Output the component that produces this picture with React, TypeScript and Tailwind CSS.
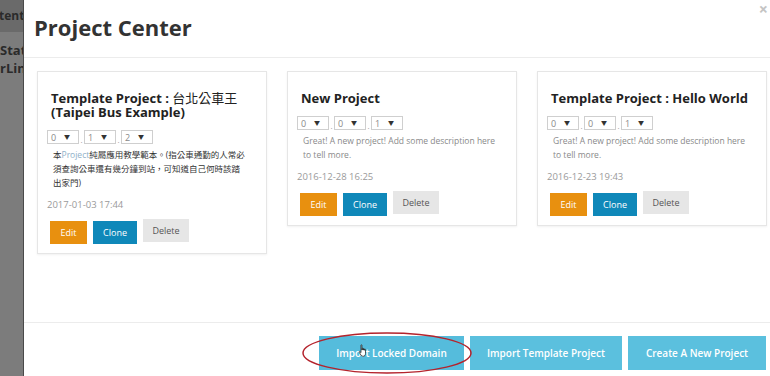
import React from 'react'

const font = { fontFamily: '"Open Sans", "Noto Sans CJK TC", sans-serif' }

interface Project {
  title: React.ReactNode
  versions: string[]
  description: React.ReactNode
  date: string
}

const projects: Project[] = [
  {
    title: (
      <>
        Template Project : <span className="font-normal">台北公車王</span> (Taipei Bus Example)
      </>
    ),
    versions: ['0', '1', '2'],
    description: (
      <span className="text-[#333]">
        本<span className="text-[#8fb0c8]">Project</span>純屬應用教學範本。(指公車通勤的人常必
        <br />
        須查詢公車還有幾分鐘到站，可知道自己何時該踏
        <br />
        出家門)
      </span>
    ),
    date: '2017-01-03 17:44',
  },
  {
    title: 'New Project',
    versions: ['0', '0', '1'],
    description: 'Great! A new project! Add some description here to tell more.',
    date: '2016-12-28 16:25',
  },
  {
    title: 'Template Project : Hello World',
    versions: ['0', '0', '1'],
    description: 'Great! A new project! Add some description here to tell more.',
    date: '2016-12-23 19:43',
  },
]

function VersionSelect({ value }: { value: string }) {
  return (
    <div className="w-[32px] h-[14px] border border-[#cfcfcf] bg-white flex items-center pl-[3px] text-[9px] text-[#888] leading-none">
      <span className="w-[13px]">{value}</span>
      <span className="text-[6px] text-[#333]">▼</span>
    </div>
  )
}

function ProjectCard({ project }: { project: Project }) {
  return (
    <div className="w-[230px] border border-[#e6e6e6] shadow-[0_1px_2px_rgba(0,0,0,0.06)] bg-white pt-[19px] pb-[9px] px-[9px]">
      <div className="px-[4px] text-[13px] leading-[14px] font-bold text-[#222]">{project.title}</div>
      <div className="flex items-end mt-[11px]">
        {project.versions.map((v, i) => (
          <React.Fragment key={i}>
            {i > 0 && <span className="w-[5px] text-center text-[8px] leading-[8px] text-[#999]">.</span>}
            <VersionSelect value={v} />
          </React.Fragment>
        ))}
      </div>
      <p className="mt-[4px] pl-[6px] w-[204px] text-[8.5px] leading-[14px] text-[#8a8a8a]">{project.description}</p>
      <div className="mt-[8px] text-[9.5px] leading-[14px] text-[#9a9a9a]">{project.date}</div>
      <div className="flex items-start gap-[6px] mt-[7px] ml-[3px]">
        <button className="mt-[2px] h-[23px] w-[37px] bg-[#e8900f] text-white text-[9px]">Edit</button>
        <button className="mt-[2px] h-[23px] w-[44px] bg-[#0f88b9] text-white text-[9px]">Clone</button>
        <button className="h-[23px] w-[46px] bg-[#e6e6e6] text-[#555] text-[9px]">Delete</button>
      </div>
    </div>
  )
}

export default function App() {
  return (
    <div className="w-[770px] h-[376px] flex overflow-hidden bg-[#7c7c7c] relative" style={font}>
      <div className="w-[23px] shrink-0 overflow-hidden text-[#2a2a2a] font-bold whitespace-nowrap">
        <div className="h-[32px] bg-[#6a6a6a] flex items-center text-[12px] -ml-[1px]">tent</div>
        <div className="pt-[9px] text-[13px] leading-[18px]">
          <div>Stat</div>
          <div>rLin</div>
        </div>
      </div>

      <div className="flex-1 bg-white border-l border-[#4a4a4a] flex flex-col relative">
        <div className="h-[58px] border-b border-[#ececec] flex items-center px-[10px]">
          <h1 className="text-[22px] font-bold text-[#333] -mt-[2px]">Project Center</h1>
        </div>
        <span className="absolute top-[1px] right-[2px] text-[16px] font-bold text-[#c4c4c4] leading-none">×</span>

        <div className="flex-1 flex items-start gap-[20px] pl-[13px] pt-[13px]">
          {projects.map((p, i) => (
            <ProjectCard key={i} project={p} />
          ))}
        </div>

        <div className="h-[54px] border-t border-[#ececec] flex justify-end items-start gap-[6px] pt-[13px] pr-[4px]">
          <button className="h-[34px] w-[145px] bg-[#55bcdc] text-white text-[10px] font-semibold">Import Locked Domain</button>
          <button className="h-[34px] w-[152px] bg-[#5bc0de] text-white text-[10px] font-semibold">Import Template Project</button>
          <button className="h-[34px] w-[138px] bg-[#5bc0de] text-white text-[10px] font-semibold">Create A New Project</button>
        </div>
      </div>

      <svg className="absolute left-[300px] top-[331px] pointer-events-none" width="178" height="45" viewBox="0 0 178 45">
        <ellipse cx="87" cy="22" rx="84" ry="20" fill="none" stroke="#b4232c" strokeWidth="1.5" />
      </svg>
      <svg className="absolute left-[358px] top-[344px] pointer-events-none" width="11" height="14" viewBox="0 0 11 14">
        <path
          d="M3 1.2c0-.6.9-.6.9 0V6h.3V4.6c0-.6.9-.6.9 0V6h.3V5c0-.6.9-.6.9 0v1.2h.3V5.6c0-.6.9-.6.9 0V9.5c0 1.6-1 2.8-2.4 2.8H5c-1 0-1.6-.5-2.100-1.3L1.2 8.2c-.3-.5.3-1 .7-.6L3 8.7z"
          fill="#fff"
          stroke="#111"
          strokeWidth="0.7"
        />
      </svg>
    </div>
  )
}
